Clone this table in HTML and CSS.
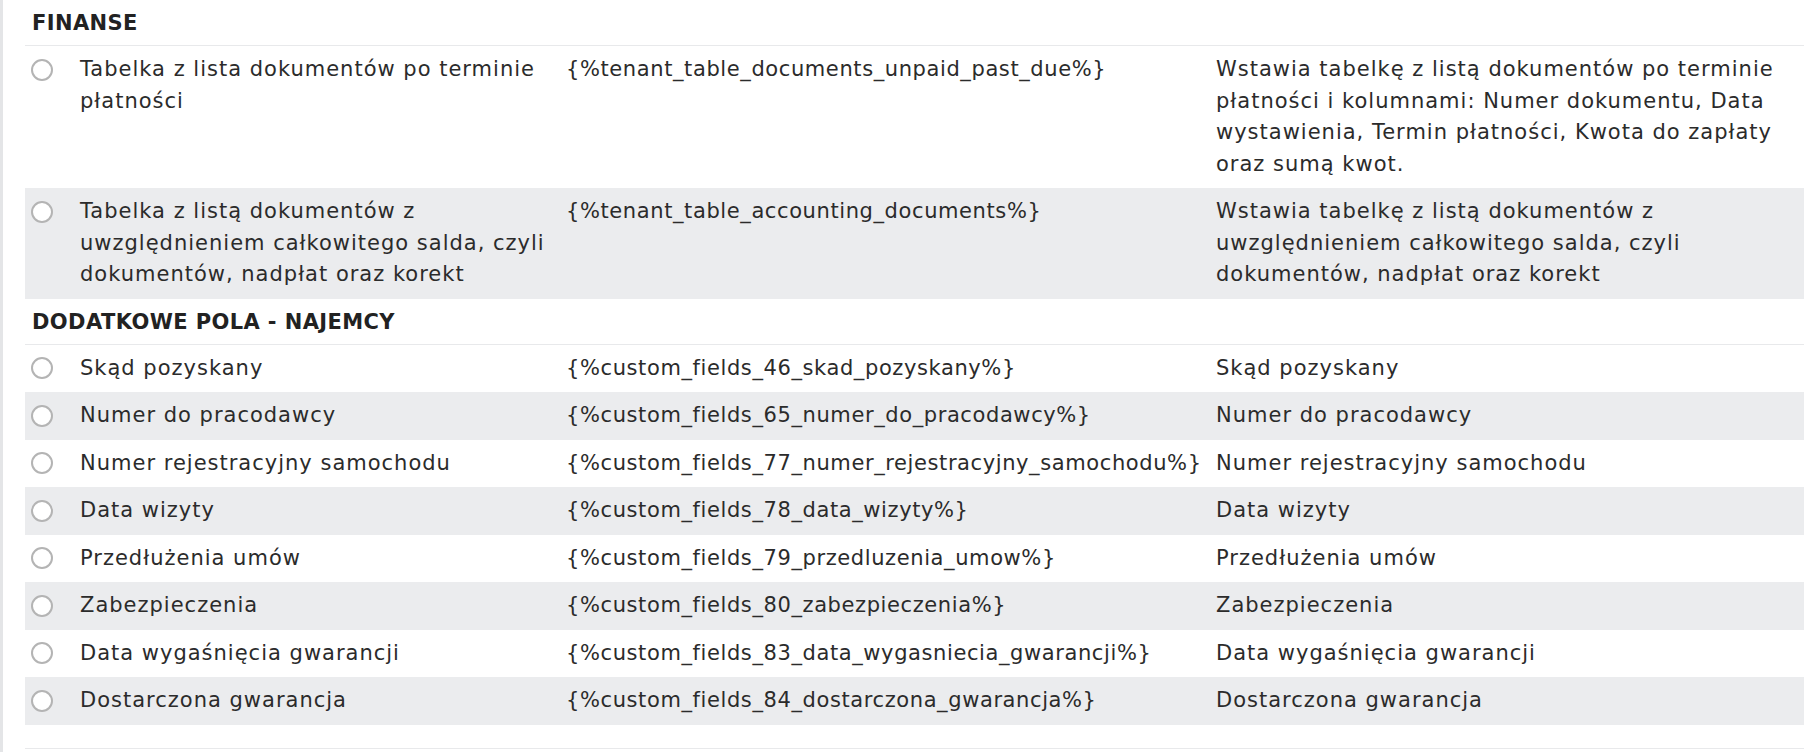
FILE: index.html
```html
<!DOCTYPE html>
<html lang="pl">
<head>
<meta charset="utf-8">
<title>Zmienne</title>
<link rel="stylesheet" href="styles.css">
</head>
<body>
<div class="page">
  <div class="edge"></div>
  <main class="list">
    <section class="group">
      <h2 class="group-title">FINANSE</h2>
      <div class="rows">
        <div class="row">
          <span class="radio"></span>
          <span class="label">Tabelka z lista dokumentów po terminie płatności</span>
          <span class="code">{%tenant_table_documents_unpaid_past_due%}</span>
          <span class="desc">Wstawia tabelkę z listą dokumentów po terminie płatności i kolumnami: Numer dokumentu, Data wystawienia, Termin płatności, Kwota do zapłaty oraz sumą kwot.</span>
        </div>
        <div class="row">
          <span class="radio"></span>
          <span class="label">Tabelka z listą dokumentów z uwzględnieniem całkowitego salda, czyli dokumentów, nadpłat oraz korekt</span>
          <span class="code">{%tenant_table_accounting_documents%}</span>
          <span class="desc">Wstawia tabelkę z listą dokumentów z uwzględnieniem całkowitego salda, czyli dokumentów, nadpłat oraz korekt</span>
        </div>
      </div>
    </section>
    <section class="group">
      <h2 class="group-title">DODATKOWE POLA - NAJEMCY</h2>
      <div class="rows">
        <div class="row">
          <span class="radio"></span>
          <span class="label">Skąd pozyskany</span>
          <span class="code">{%custom_fields_46_skad_pozyskany%}</span>
          <span class="desc">Skąd pozyskany</span>
        </div>
        <div class="row">
          <span class="radio"></span>
          <span class="label">Numer do pracodawcy</span>
          <span class="code">{%custom_fields_65_numer_do_pracodawcy%}</span>
          <span class="desc">Numer do pracodawcy</span>
        </div>
        <div class="row">
          <span class="radio"></span>
          <span class="label">Numer rejestracyjny samochodu</span>
          <span class="code">{%custom_fields_77_numer_rejestracyjny_samochodu%}</span>
          <span class="desc">Numer rejestracyjny samochodu</span>
        </div>
        <div class="row">
          <span class="radio"></span>
          <span class="label">Data wizyty</span>
          <span class="code">{%custom_fields_78_data_wizyty%}</span>
          <span class="desc">Data wizyty</span>
        </div>
        <div class="row">
          <span class="radio"></span>
          <span class="label">Przedłużenia umów</span>
          <span class="code">{%custom_fields_79_przedluzenia_umow%}</span>
          <span class="desc">Przedłużenia umów</span>
        </div>
        <div class="row">
          <span class="radio"></span>
          <span class="label">Zabezpieczenia</span>
          <span class="code">{%custom_fields_80_zabezpieczenia%}</span>
          <span class="desc">Zabezpieczenia</span>
        </div>
        <div class="row">
          <span class="radio"></span>
          <span class="label">Data wygaśnięcia gwarancji</span>
          <span class="code">{%custom_fields_83_data_wygasniecia_gwarancji%}</span>
          <span class="desc">Data wygaśnięcia gwarancji</span>
        </div>
        <div class="row">
          <span class="radio"></span>
          <span class="label">Dostarczona gwarancja</span>
          <span class="code">{%custom_fields_84_dostarczona_gwarancja%}</span>
          <span class="desc">Dostarczona gwarancja</span>
        </div>
      </div>
    </section>
    <div class="list-end"></div>
  </main>
</div>
</body>
</html>
```
FILE: styles.css
```css
* { box-sizing: border-box; }
html, body { margin: 0; padding: 0; background: #ffffff; }
body {
  font-family: "DejaVu Sans", "Noto Sans", sans-serif;
  font-size: 21px;
  color: #2b2b2b;
  overflow: hidden;
}
.page {
  display: flex;
  align-items: stretch;
  min-height: 752px;
}
.edge {
  width: 3px;
  flex: none;
  background: #e4e5e7;
}
.list {
  margin-left: 22px;
  width: 1779px;
  flex: none;
}
.group-title {
  margin: 0;
  padding: 11px 7px 9px;
  font-size: 21px;
  line-height: 25px;
  font-weight: 700;
  letter-spacing: 0.4px;
  color: #222222;
  border-bottom: 1px solid #e8e9eb;
}
.rows {
  display: flex;
  flex-direction: column;
}
.row {
  display: grid;
  grid-template-columns: 55px 486px 650px 1fr;
  align-items: start;
  padding: 8px 0;
  line-height: 31.5px;
  letter-spacing: 1px;
}
.row:nth-child(even) {
  background: #ebecee;
}
.radio {
  width: 22px;
  height: 22px;
  margin: 4.75px 0 0 6px;
  border: 2px solid #b4b4b4;
  border-radius: 50%;
  background: #ffffff;
}
.label, .desc {
  padding-right: 10px;
}
.code {
  letter-spacing: 0.6px;
  white-space: nowrap;
}
.list-end {
  margin-top: 23px;
  border-top: 1px solid #e8e9eb;
}
```
